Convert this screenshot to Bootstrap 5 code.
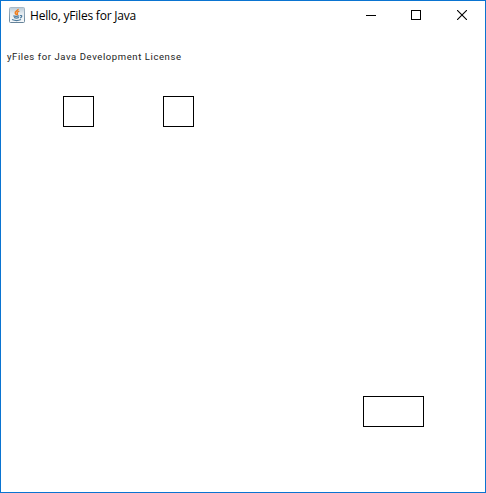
<!DOCTYPE html>
<html lang="en">
<head>
<meta charset="utf-8">
<meta name="viewport" content="width=device-width, initial-scale=1">
<title>Hello, yFiles for Java</title>
<link href="https://cdn.jsdelivr.net/npm/bootstrap@5.3.0/dist/css/bootstrap.min.css" rel="stylesheet">
<style>
  .app-window { border: 1px solid #0a74d1; }
  .title-bar { height: 28px; margin-bottom: 1px; padding-left: 8px; }
  .app-title { font: 12px/16px "Open Sans", "Noto Sans", sans-serif; color: #000; margin: 1px 0 0 5px; letter-spacing: -.22px; white-space: nowrap; }
  .win-btn { width: 46px; height: 28px; background: none; border: 0; }
  .win-btn:first-child { width: 44px; }
  .win-btn svg { display: block; }
  .license { left: 6px; top: 20px; font: 400 9.5px/14px Roboto, "Open Sans", sans-serif; color: #222; letter-spacing: .59px; white-space: nowrap; }
  .graph-node { border: 1px solid #000; width: 31px; height: 31px; top: 66px; }
  .node-a { left: 62px; }
  .node-b { left: 162px; }
  .node-c { left: 362px; top: 366px; width: 61px; }
</style>
<script src="https://cdn.jsdelivr.net/npm/bootstrap@5.3.0/dist/js/bootstrap.bundle.min.js" defer></script>
</head>
<body class="bg-white overflow-hidden">
<div class="app-window vh-100 d-flex flex-column bg-white">
  <header class="title-bar d-flex align-items-center flex-shrink-0">
    <svg class="flex-shrink-0" width="16" height="16" viewBox="0 0 16 16" aria-hidden="true">
      <defs>
        <linearGradient id="tile" x1="0" y1="0" x2="0" y2="1"><stop offset="0" stop-color="#b9cad6"/><stop offset=".4" stop-color="#e4ebf0"/><stop offset="1" stop-color="#f8fafb"/></linearGradient>
        <linearGradient id="edge" x1="0" y1="0" x2="0" y2="1"><stop offset="0" stop-color="#a9bac8"/><stop offset="1" stop-color="#668399"/></linearGradient>
      </defs>
      <rect x=".5" y=".5" width="15" height="15" rx="1" fill="url(#tile)" stroke="url(#edge)"/>
      <path d="M9.2 1.8C9.4 3.6 5.6 4.2 6.2 6C6.4 6.9 7.4 7.3 7.5 8.3M10.3 4.2C8 5 7.8 5.8 8.4 6.5C8.8 7.1 8.5 7.7 8.1 8.2" fill="none" stroke="#f07d1c" stroke-width="1.4"/>
      <path d="M4.3 8.8C5.5 9.6 8.8 9.5 10.3 8.8M5 10.5C6.5 11.2 8.7 11 10 10.5M3 12.5C5.5 13.6 9.8 13.6 12 12.5M11 8.6C13.7 8 12.9 10.4 11 11" fill="none" stroke="#4f7c9e" stroke-width="1.2"/>
    </svg>
    <span class="app-title">Hello, yFiles for Java</span>
    <div class="d-flex ms-auto">
      <button class="win-btn p-0 d-flex align-items-center justify-content-center" aria-label="Minimize"><svg width="10" height="10" viewBox="0 0 10 10" shape-rendering="crispEdges"><path d="M0 5.5H10" stroke="#000"/></svg></button>
      <button class="win-btn p-0 d-flex align-items-center justify-content-center" aria-label="Maximize"><svg width="10" height="10" viewBox="0 0 10 10" shape-rendering="crispEdges"><path d="M.5.5H9.5V9.5H.5Z" fill="none" stroke="#000"/></svg></button>
      <button class="win-btn p-0 d-flex align-items-center justify-content-center" aria-label="Close"><svg width="10" height="10" viewBox="0 0 10 10"><path d="M0 0L10 10M10 0L0 10" stroke="#000" stroke-width="1.1"/></svg></button>
    </div>
  </header>
  <main class="position-relative flex-grow-1">
    <div class="license position-absolute">yFiles for Java Development License</div>
    <div class="graph-node node-a position-absolute"></div>
    <div class="graph-node node-b position-absolute"></div>
    <div class="graph-node node-c position-absolute"></div>
  </main>
</div>
</body>
</html>
